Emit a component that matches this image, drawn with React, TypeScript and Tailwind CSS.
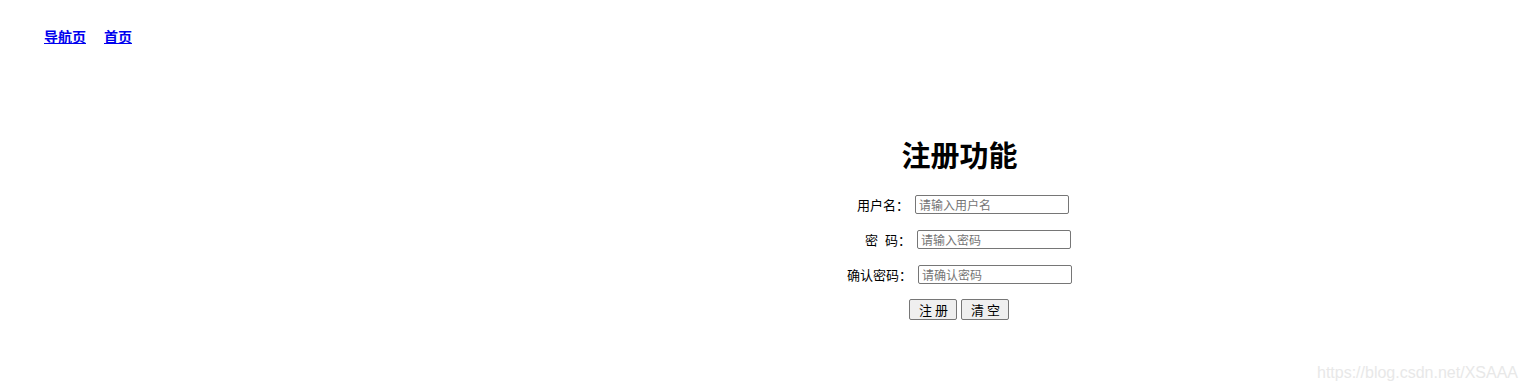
import React from 'react';

const cjk = "font-['Microsoft_YaHei','Noto_Sans_CJK_SC',sans-serif]";

function Field({ label, placeholder, shift }: { label: React.ReactNode; placeholder: string; shift: string }) {
  return (
    <div className={`flex items-center justify-center h-[19px] ${shift}`}>
      <label className="text-[13px] leading-[17px] text-black whitespace-nowrap">{label}</label>
      <input
        type="text"
        placeholder={placeholder}
        className="ml-[6px] w-[154px] h-[19px] border border-[#767676] rounded-[2px] px-[3px] text-[12px] leading-[17px] text-black placeholder:text-[#757575] outline-none"
      />
    </div>
  );
}

export default function App() {
  return (
    <div className={`relative w-[1528px] h-[391px] bg-white overflow-hidden ${cjk}`}>
      <nav className="flex gap-[18px] pt-[27px] pl-[44px] text-[14px] leading-[18px] font-bold">
        <a href="#" className="text-[#0000ee] underline">导航页</a>
        <a href="#" className="text-[#0000ee] underline">首页</a>
      </nav>

      <div className="flex justify-center pl-[391px]">
        <form className="flex flex-col items-center" onSubmit={(e) => e.preventDefault()}>
          <h1 className="mt-[91px] text-[29px] leading-[36px] font-bold text-black">注册功能</h1>
          <div className="mt-[23px] flex flex-col gap-[16px]">
            <Field label="用户名：" placeholder="请输入用户名" shift="pl-[7px]" />
            <Field
              label={
                <span className="flex">
                  <span>密</span>
                  <span className="ml-[7px]">码：</span>
                </span>
              }
              placeholder="请输入密码"
              shift="pl-[17px]"
            />
            <Field label="确认密码：" placeholder="请确认密码" shift="" />
          </div>
          <div className="mt-[15px] flex gap-[4px]">
            <button type="submit" className="w-[48px] h-[21px] border border-[#767676] rounded-[2px] bg-[#efefef] text-[13px] leading-[19px] text-black">注 册</button>
            <button type="reset" className="w-[48px] h-[21px] border border-[#767676] rounded-[2px] bg-[#efefef] text-[13px] leading-[19px] text-black">清 空</button>
          </div>
        </form>
      </div>

      <div className="absolute right-[10px] bottom-[8px] text-[16px] leading-[20px] text-[#e8e8e8] font-['Liberation_Sans',Arial,sans-serif]">
        https://blog.csdn.net/XSAAA
      </div>
    </div>
  );
}
